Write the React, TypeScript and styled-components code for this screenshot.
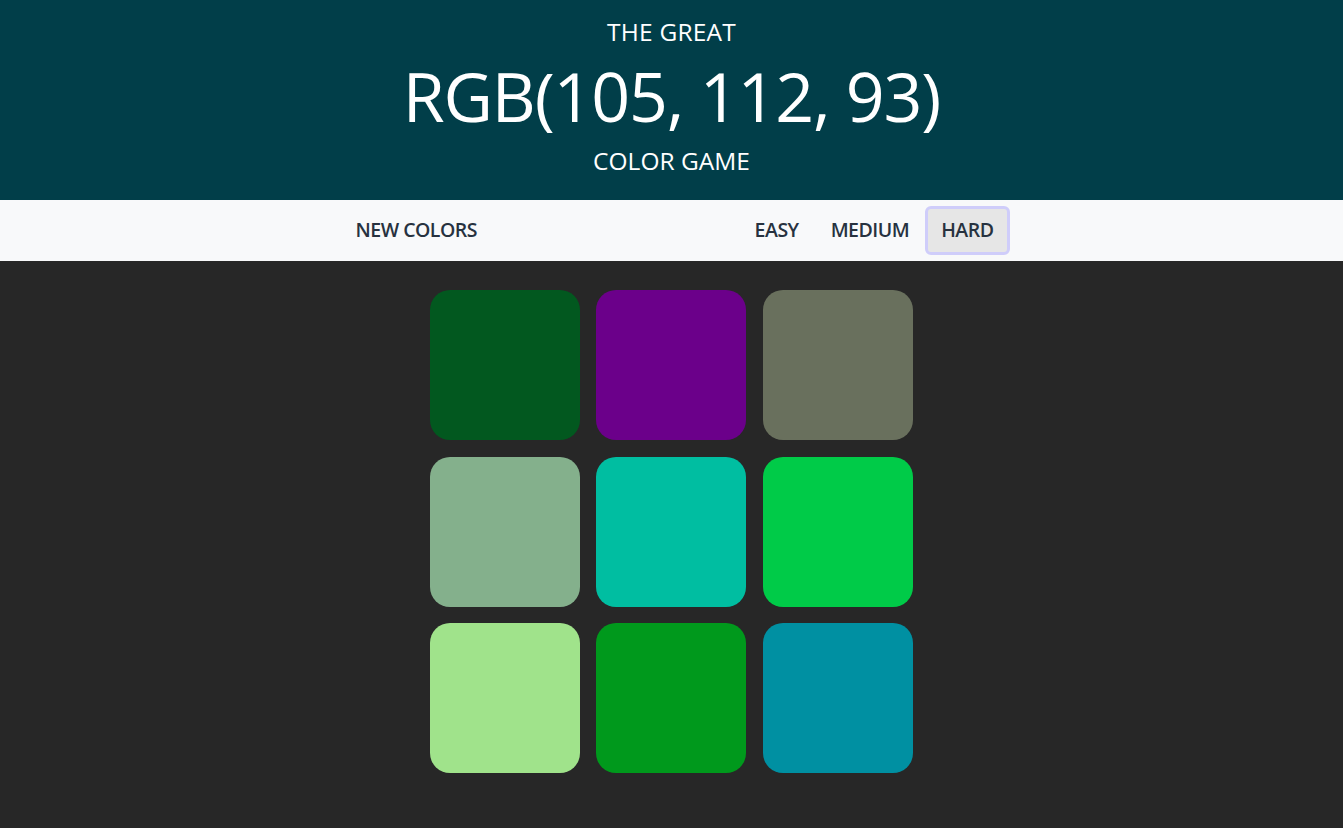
import React from "react";
import styled, { createGlobalStyle } from "styled-components";

const Global = createGlobalStyle`
  html, body { margin: 0; padding: 0; background: #272727; }
  body { font-family: "Open Sans", "Noto Sans", sans-serif; }
  * { box-sizing: border-box; }
`;

const Page = styled.div`
  min-height: 828px;
  background: #272727;
`;

const Header = styled.header`
  height: 200px;
  background: #013e49;
  color: #ffffff;
  display: flex;
  flex-direction: column;
  align-items: center;
  text-transform: uppercase;
`;

const SubTitle = styled.div<{ $top: number; $ls: number }>`
  font-size: 24.5px;
  line-height: 32px;
  letter-spacing: ${(p) => p.$ls}px;
  margin-top: ${(p) => p.$top}px;
`;

const Title = styled.h1`
  margin: 0;
  font-size: 68px;
  font-weight: 400;
  line-height: 96px;
  letter-spacing: -1.15px;
`;

const Nav = styled.nav`
  height: 61px;
  background: #f8f9fa;
  display: flex;
  justify-content: center;
  padding-left: 6px;
`;

const NavInner = styled.div`
  width: 670px;
  display: flex;
  align-items: center;
`;

const Spacer = styled.div`
  flex: 1;
`;

const NavButton = styled.button<{ $active?: boolean }>`
  font-family: inherit;
  font-size: 19.5px;
  font-weight: 600;
  letter-spacing: -0.5px;
  text-transform: uppercase;
  color: #27323f;
  height: 49px;
  padding: 0 13px 3px;
  border-radius: 6px;
  border: 3px solid ${(p) => (p.$active ? "#cfcdfa" : "transparent")};
  background: ${(p) => (p.$active ? "#e6e6e6" : "transparent")};
  cursor: pointer;
`;

const Board = styled.div`
  width: 500px;
  margin: 20.7px auto 0;
  display: flex;
  flex-wrap: wrap;
`;

const Square = styled.div`
  width: 150px;
  height: 150px;
  margin: 8.33px;
  border-radius: 20px;
`;

const colors = [
  "#02581f",
  "#6b008a",
  "#69705d",
  "#84b08c",
  "#00bea1",
  "#00cb48",
  "#a0e38b",
  "#00991c",
  "#0090a2",
];

export default function App() {
  return (
    <Page>
      <Global />
      <Header>
        <SubTitle $top={16} $ls={0.2}>The Great</SubTitle>
        <Title>RGB(105, 112, 93)</Title>
        <SubTitle $top={1} $ls={0}>Color Game</SubTitle>
      </Header>
      <Nav>
        <NavInner>
          <NavButton>New Colors</NavButton>
          <Spacer />
          <NavButton>Easy</NavButton>
          <NavButton>Medium</NavButton>
          <NavButton $active>Hard</NavButton>
        </NavInner>
      </Nav>
      <Board>
        {colors.map((c, i) => (
          <Square key={i} style={{ background: c }} />
        ))}
      </Board>
    </Page>
  );
}
